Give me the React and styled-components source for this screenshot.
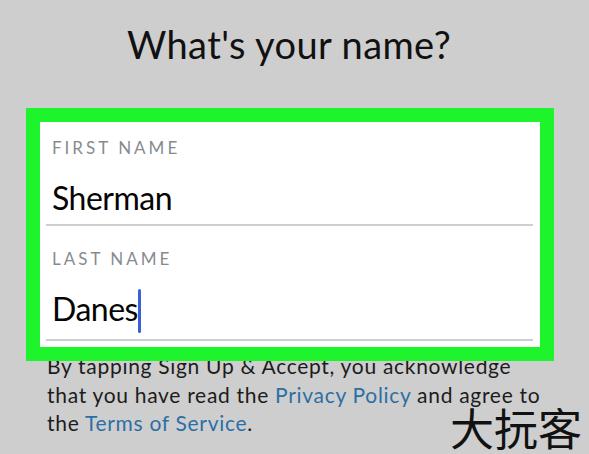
import React from "react";
import styled, { createGlobalStyle } from "styled-components";

const Global = createGlobalStyle`
  html, body { margin: 0; padding: 0; background: #cecece; }
  * { box-sizing: border-box; }
`;

const Page = styled.div`
  position: relative;
  width: 589px;
  height: 454px;
  overflow: hidden;
  background: #cecece;
  font-family: Lato, "Open Sans", sans-serif;
`;

const Title = styled.h1`
  margin: 0;
  padding: 22px 11px 0 0;
  font-size: 38px;
  line-height: 44px;
  font-weight: 400;
  letter-spacing: 0.4px;
  color: #111;
  text-align: center;
`;

const Highlight = styled.div`
  position: relative;
  z-index: 1;
  margin: 42px 0 0 26px;
  width: 528px;
  border: 14px solid #1ef42c;
`;

const Card = styled.div`
  background: #fff;
  padding: 0 7px 6.5px 6px;
`;

const Field = styled.div`
  display: flex;
  flex-direction: column;
  padding-top: 23.5px;
  &:first-child { padding-top: 16px; }
`;

const Label = styled.div`
  padding-left: 6px;
  font-size: 17px;
  line-height: 20px;
  letter-spacing: 3px;
  color: #868b90;
`;

const Value = styled.div`
  margin-top: 20px;
  padding-left: 6px;
  font-size: 32px;
  line-height: 40px;
  letter-spacing: -0.5px;
  color: #050505;
`;

const Caret = styled.span`
  display: inline-block;
  width: 3px;
  height: 44px;
  margin-left: 0;
  border-radius: 2px;
  background: #3c5fd6;
  vertical-align: -12px;
`;

const Divider = styled.div`
  margin-top: 6px;
  height: 1.5px;
  background: #cdd0d3;
`;

const Footer = styled.p`
  margin: -9px 0 0 47px;
  font-size: 21px;
  line-height: 28.5px;
  letter-spacing: 0.7px;
  color: #1c1c1c;
`;

const Link = styled.span`
  color: #2c6ea6;
`;

const Watermark = styled.div`
  position: absolute;
  left: 450px;
  top: 405px;
  font-family: "Noto Sans CJK SC", sans-serif;
  font-size: 44px;
  line-height: 44px;
  color: #111;
`;

export default function App() {
  return (
    <>
      <Global />
      <Page>
        <Title>What's your name?</Title>
        <Highlight>
          <Card>
            <Field>
              <Label>FIRST NAME</Label>
              <Value>Sherman</Value>
              <Divider />
            </Field>
            <Field>
              <Label>LAST NAME</Label>
              <Value>
                Danes
                <Caret />
              </Value>
              <Divider />
            </Field>
          </Card>
        </Highlight>
        <Footer>
          By tapping Sign Up &amp; Accept, you acknowledge
          <br />
          that you have read the <Link>Privacy Policy</Link> and agree to
          <br />
          the <Link>Terms of Service</Link>.
        </Footer>
        <Watermark>大抏客</Watermark>
      </Page>
    </>
  );
}
